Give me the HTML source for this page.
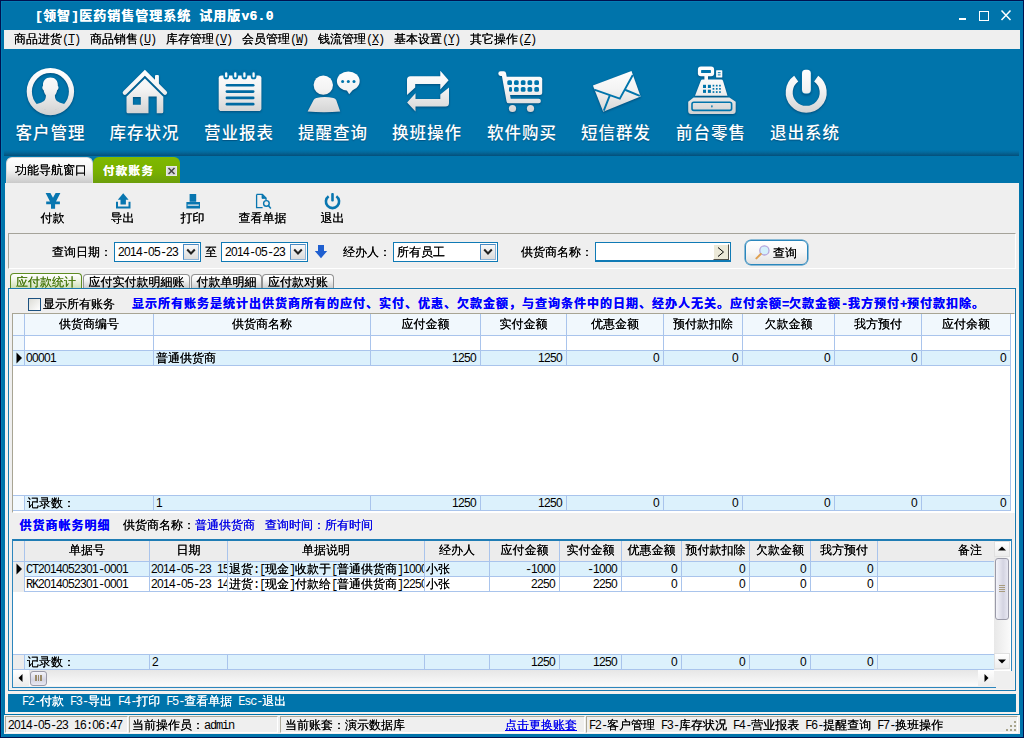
<!DOCTYPE html>
<html lang="zh-CN"><head><meta charset="utf-8"><title>[领智]医药销售管理系统</title>
<style>
*{box-sizing:border-box;margin:0;padding:0}
html,body{width:1024px;height:738px;overflow:hidden}
body{background:#0074ab;position:relative;font-family:"Liberation Sans","WenQuanYi Zen Hei","Noto Sans CJK SC",sans-serif;font-size:12px;line-height:14px;color:#000}
.a{position:absolute}
.t{position:absolute;white-space:nowrap;height:14px;line-height:14px;text-shadow:0 0 0}
.l{font-family:"Liberation Mono",monospace;font-size:12px;letter-spacing:-1.2px;white-space:pre;text-shadow:none}
.d{font-family:"Liberation Sans",sans-serif;font-size:12px;letter-spacing:-0.67px;text-shadow:none}
.lb{font-family:"Liberation Mono",monospace;font-weight:bold;white-space:pre}
.b{font-family:"Liberation Sans","Noto Sans CJK SC",sans-serif;font-weight:bold}
.big{position:absolute;white-space:nowrap;color:#fff;font-family:"Liberation Sans","Noto Sans CJK SC",sans-serif;font-size:16.5px;font-weight:500;letter-spacing:1px;line-height:20px;width:101px;text-align:center;text-shadow:0 1px 1px rgba(0,50,90,.5)}
.c{text-align:center}
.r{text-align:right}
</style></head>
<body>
<div class="a" style="left:0px;top:0px;width:1024px;height:738px;border:1px solid #001250"></div>
<div class="a" style="left:1px;top:1px;width:1022px;height:1px;background:#047eb4"></div>
<div class="a" style="left:1px;top:1px;width:1px;height:736px;background:#047eb4"></div>
<div class="t b" style="left:35px;top:8px;color:#fff;font-size:13px;letter-spacing:1px;height:16px;line-height:16px"><span class="lb" style="font-size:13px;letter-spacing:0.3px">[</span>领智<span class="lb" style="font-size:13px;letter-spacing:0.3px">]</span>医药销售管理系统<span class="lb" style="font-size:13px;letter-spacing:0.3px"> </span>试用版<span class="lb" style="font-size:13px;letter-spacing:0.3px">v6.0</span></div>
<div class="a" style="left:959px;top:18px;width:7px;height:2px;background:#fff"></div>
<div class="a" style="left:979px;top:11px;width:9.5px;height:9.5px;border:1px solid #fff"></div>
<svg class="a" style="left:1000px;top:9px" width="12" height="12" viewBox="0 0 12 12"><path d="M1.5 1.5 L10.5 11 M10.5 1.5 L1.5 11" stroke="#fff" stroke-width="1.5" fill="none"/></svg>
<div class="a" style="left:4px;top:30px;width:1016px;height:19px;background:#efefef"></div>
<div class="t" style="left:14px;top:32px;">商品进货<span class="l">(<u>T</u>)</span></div>
<div class="t" style="left:90px;top:32px;">商品销售<span class="l">(<u>U</u>)</span></div>
<div class="t" style="left:166px;top:32px;">库存管理<span class="l">(<u>V</u>)</span></div>
<div class="t" style="left:242px;top:32px;">会员管理<span class="l">(<u>W</u>)</span></div>
<div class="t" style="left:318px;top:32px;">钱流管理<span class="l">(<u>X</u>)</span></div>
<div class="t" style="left:394px;top:32px;">基本设置<span class="l">(<u>Y</u>)</span></div>
<div class="t" style="left:470px;top:32px;">其它操作<span class="l">(<u>Z</u>)</span></div>
<svg class="a" style="left:0;top:60px;filter:drop-shadow(0 1px 1px rgba(0,45,85,.55))" width="1024" height="62" viewBox="0 60 1024 62">
<defs>
<linearGradient id="g" gradientUnits="userSpaceOnUse" x1="0" y1="68" x2="0" y2="114"><stop offset="0" stop-color="#ffffff"/><stop offset="0.45" stop-color="#f4f4f4"/><stop offset="1" stop-color="#d2d2d2"/></linearGradient>
<clipPath id="cc"><circle cx="50.4" cy="91.6" r="19.2"/></clipPath>
</defs>
<g fill="url(#g)" stroke="none">
<!-- customer -->
<circle cx="50.4" cy="91.6" r="21.1" fill="none" stroke="url(#g)" stroke-width="5.2"/>
<g clip-path="url(#cc)"><path d="M50.4 77.4 C55.6 77.4 58.2 81 57.8 86 C59 86.4 58.6 89.6 57.2 90 C56.6 93 55.6 94.4 54.9 95.2 C54.9 100 57 101.6 61 102.9 C65 104.2 69.5 105 71 108 L71 114 L30 114 L30 108 C31.5 105 36 104.2 40 102.9 C44 101.6 45.9 100 45.9 95.2 C45.2 94.4 44.2 93 43.6 90 C42.2 89.6 41.8 86.4 43 86 C42.6 81 45.2 77.4 50.4 77.4 Z"/></g>
<!-- house -->
<path d="M124.8 92.8 L144.9 72.7 L165 92.8" fill="none" stroke="url(#g)" stroke-width="4.2" stroke-linecap="round" stroke-linejoin="miter"/>
<rect x="155" y="75" width="3.9" height="11" rx="1"/>
<path fill-rule="evenodd" d="M144.9 78.4 L163.3 96.8 V111.7 Q163.3 113.2 161.8 113.2 H128 Q126.5 113.2 126.5 111.7 V96.8 Z M132.9 97 H140.8 V104.7 H132.9 Z M148.5 96.5 H156.7 V113.2 H148.5 Z"/>
<!-- notepad -->
<rect x="218.7" y="75.5" width="42.7" height="35.6" rx="2.8"/>
<g stroke="#0074ab" stroke-width="1.7"><rect x="224.2" y="71.4" width="4" height="7" rx="2"/><rect x="233.3" y="71.4" width="4" height="7" rx="2"/><rect x="242.4" y="71.4" width="4" height="7" rx="2"/><rect x="251.6" y="71.4" width="4" height="7" rx="2"/></g>
<g fill="#006aa2"><rect x="225.6" y="83.9" width="28.9" height="2.7" rx="1.3"/><rect x="225.6" y="90.2" width="28.9" height="2.7" rx="1.3"/><rect x="225.6" y="96.5" width="28.9" height="2.7" rx="1.3"/><rect x="225.6" y="102.8" width="28.9" height="2.7" rx="1.3"/></g>
<!-- reminder -->
<circle cx="323.3" cy="85.1" r="9.7"/>
<path d="M307.6 111.4 L313.6 100 Q314.4 98.4 316.4 98 Q324.6 96.2 333.4 98 Q335.4 98.4 336.2 100 L340.2 111.4 Q324 113 307.6 111.4 Z"/>
<ellipse cx="348.3" cy="81.1" rx="11.4" ry="9.7"/>
<path d="M346 89 L349.2 94.2 L354.5 88 Z"/>
<g fill="#0074ab"><circle cx="342.6" cy="81.5" r="1.5"/><circle cx="348.3" cy="81.5" r="1.5"/><circle cx="354" cy="81.5" r="1.5"/></g>
<!-- swap -->
<path d="M410.5 76.2 H440.3 V70.8 L448.6 80.2 L440.3 89.6 V84 H415.2 V87.4 L407 95 V79.7 Q407 76.2 410.5 76.2 Z"/>
<path d="M445.5 106.6 H415.5 V111.6 L407.1 102.4 L415.5 93.3 V99 H440.3 V94.6 L449 87.6 V103.1 Q449 106.6 445.5 106.6 Z"/>
<!-- cart -->
<path d="M500.6 73.6 H503.8 L508.8 101 H538.6" fill="none" stroke="url(#g)" stroke-width="4.6" stroke-linecap="round" stroke-linejoin="round"/>
<path d="M505.2 76.7 H539.7 Q542.2 76.7 542.2 79.2 V92.4 Q542.2 94.9 539.7 94.9 H509 Z"/>
<g fill="#0074ab"><rect x="507.3" y="80.2" width="4.7" height="4.7" rx="1.5"/><rect x="514.0" y="80.2" width="4.7" height="4.7" rx="1.5"/><rect x="520.8" y="80.2" width="4.7" height="4.7" rx="1.5"/><rect x="527.5" y="80.2" width="4.7" height="4.7" rx="1.5"/><rect x="534.3" y="80.2" width="4.7" height="4.7" rx="1.5"/><rect x="509" y="87.1" width="3" height="4.7" rx="1.3"/><rect x="514.0" y="87.1" width="4.7" height="4.7" rx="1.5"/><rect x="520.8" y="87.1" width="4.7" height="4.7" rx="1.5"/><rect x="527.5" y="87.1" width="4.7" height="4.7" rx="1.5"/><rect x="534.3" y="87.1" width="4.7" height="4.7" rx="1.5"/></g>
<circle cx="512.5" cy="108.5" r="3.6"/><circle cx="530.5" cy="108.5" r="3.6"/>
<!-- envelope -->
<path d="M592.9 85.6 L631.5 71.1 L640.6 96.6 L603.2 111.8 Z"/>
<path d="M594.2 89.6 L619.8 98.6 L632.8 75 M603.8 110.6 L609.8 95.4 M639.8 95.8 L625.6 90" fill="none" stroke="#0074ab" stroke-width="1.9"/>
<!-- register -->
<rect x="697.9" y="66.5" width="16.2" height="9.8" rx="3"/>
<rect x="701.1" y="69.9" width="9.8" height="3.1" rx="0.6" fill="#0074ab"/>
<rect x="704.4" y="75.5" width="3.6" height="5"/>
<rect x="716.1" y="70.2" width="6.2" height="7.4" rx="0.6"/>
<rect x="717.8" y="72.2" width="2.8" height="1" fill="#0074ab"/><rect x="717.8" y="74.4" width="2.8" height="1" fill="#0074ab"/>
<path d="M702.6 79.5 H721.2 Q722.6 79.5 723 80.8 L727.5 95.8 H695 L700.8 80.8 Q701.2 79.5 702.6 79.5 Z"/>
<g fill="#0074ab"><rect x="703.0" y="84.8" width="3" height="3.2"/><rect x="703.0" y="89.7" width="3" height="3.2"/><rect x="707.9" y="84.8" width="3" height="3.2"/><rect x="707.9" y="89.7" width="3" height="3.2"/><rect x="712.6" y="84.8" width="1.7" height="1.7"/><rect x="712.6" y="88.0" width="1.7" height="1.7"/><rect x="712.6" y="91.2" width="1.7" height="1.7"/><rect x="715.9" y="84.8" width="1.7" height="1.7"/><rect x="715.9" y="88.0" width="1.7" height="1.7"/><rect x="715.9" y="91.2" width="1.7" height="1.7"/><rect x="719.1" y="84.8" width="1.7" height="1.7"/><rect x="719.1" y="88.0" width="1.7" height="1.7"/><rect x="719.1" y="91.2" width="1.7" height="1.7"/></g>
<path d="M693.6 97.4 H729.4 L735.7 101.8 V111 Q735.7 114 732.7 114 H691.2 Q688.2 114 688.2 111 V101.8 Z"/>
<rect x="692" y="102.2" width="39.6" height="8.2" rx="1.8" fill="none" stroke="#0074ab" stroke-width="1.6"/>
<rect x="711.2" y="105.2" width="1.4" height="2.2" rx="0.6" fill="#0074ab"/>
<!-- power -->
<path d="M796.2 78.6 A17 17 0 1 0 816.2 78.6" fill="none" stroke="url(#g)" stroke-width="7" stroke-linecap="butt"/>
<rect x="802" y="69.8" width="8.8" height="23.6" rx="3.6" stroke="#0074ab" stroke-width="1.6" paint-order="stroke"/>
</g>
</svg>

<div class="big" style="left:0px;top:123px;">客户管理</div>
<div class="big" style="left:94px;top:123px;">库存状况</div>
<div class="big" style="left:188.5px;top:123px;">营业报表</div>
<div class="big" style="left:282.5px;top:123px;">提醒查询</div>
<div class="big" style="left:376.5px;top:123px;">换班操作</div>
<div class="big" style="left:471.5px;top:123px;">软件购买</div>
<div class="big" style="left:565.5px;top:123px;">短信群发</div>
<div class="big" style="left:660.5px;top:123px;">前台零售</div>
<div class="big" style="left:754.5px;top:123px;">退出系统</div>
<div class="a" style="left:4px;top:150px;width:1015px;height:6px;background:linear-gradient(to bottom,#0074ab 0%,#036a9e 35%,#045c8a 70%,#044f7a 100%)"></div>
<div class="a" style="left:6px;top:157px;width:87px;height:27px;background:linear-gradient(to bottom,#ffffff 0%,#f4f4f4 45%,#c6c6c6 100%);border-radius:6px 6px 0 0;border:1px solid #d8d8d8;border-bottom:none"></div>
<div class="t" style="left:15px;top:163px;">功能导航窗口</div>
<div class="a" style="left:93px;top:157px;width:87px;height:27px;background:linear-gradient(to bottom,#7fb900 0%,#78b000 55%,#6a9c0c 100%);border-radius:6px 6px 0 0"></div>
<div class="t b" style="left:103px;top:163.5px;color:#fff;font-size:11.5px;letter-spacing:1.3px">付款账务</div>
<div class="a" style="left:166px;top:166px;width:11px;height:10px;background:#d9d9d9;border:1px solid #e8e8e8"></div>
<svg class="a" style="left:166px;top:166px" width="11" height="10" viewBox="0 0 11 10"><path d="M2.5 2 L8.5 8 M8.5 2 L2.5 8" stroke="#444" stroke-width="1.5" fill="none"/></svg>
<div class="a" style="left:5px;top:183px;width:1014px;height:531px;background:#efefef"></div>
<div class="a" style="left:5px;top:287px;width:1014px;height:427px;background:#f5f1ef"></div>
<div class="t c" style="left:12.5px;top:211px;width:80px;">付款</div>
<div class="t c" style="left:82.5px;top:211px;width:80px;">导出</div>
<div class="t c" style="left:152.5px;top:211px;width:80px;">打印</div>
<div class="t c" style="left:222.5px;top:211px;width:80px;">查看单据</div>
<div class="t c" style="left:292.5px;top:211px;width:80px;">退出</div>
<svg class="a" style="left:0;top:190px" width="400" height="22" viewBox="0 190 400 22">
<g fill="#0876b0" stroke="none">
<!-- yen -->
<path d="M45.6 193 H50.4 L53 197.8 L55.6 193 H60.4 L56 201.4 H59.9 V204.2 H55.1 V208.8 H51 V204.2 H46.2 V201.4 H50 Z"/>
<!-- export -->
<path d="M123.2 193.2 L128.6 199.8 H125.9 V204.6 H120.5 V199.8 H117.8 Z"/>
<path d="M116 201.8 H118 V206.6 H128.5 V201.8 H130.5 V208.6 H116 Z"/>
<!-- print -->
<rect x="189.6" y="194" width="6.6" height="7.8"/>
<path d="M186.4 202 H200 V208.6 H186.4 Z M187.6 204.6 V205.8 H198.8 V204.6 Z" fill-rule="evenodd"/>
<!-- view doc -->
<path d="M256.6 194.4 H262.4 L266 198 V200 M256.6 194.4 V207.6 H262.6" fill="none" stroke="#0876b0" stroke-width="1.3"/>
<path d="M262 194.4 V198.4 H266 Z" fill="#0876b0" stroke="#0876b0" stroke-width="0.8"/>
<circle cx="266.4" cy="203.4" r="2.8" fill="none" stroke="#0876b0" stroke-width="1.4"/>
<path d="M268.4 205.6 L270.8 208.4" stroke="#0876b0" stroke-width="1.5" fill="none"/>
<!-- power -->
<path d="M328.6 196.2 A6.6 6.6 0 1 0 336.4 196.2" fill="none" stroke="#0876b0" stroke-width="2.6"/>
<rect x="331.2" y="193" width="2.6" height="8.4" rx="1"/>
</g>
</svg>

<div class="a" style="left:8px;top:233px;width:1008px;height:36px;border:1px solid #a5a39a;border-right-color:#fff;border-bottom-color:#fff"></div>
<div class="t" style="left:52px;top:245px;">查询日期：</div>
<div class="a" style="left:114px;top:242px;width:87px;height:20px;background:#fff;border:1px solid #107ab5"></div>
<div class="a" style="left:183px;top:244px;width:16px;height:16px;background:linear-gradient(#f8f8f8,#dcdcdc);border:1px solid #4a8ac4;border-right-color:#8fb4d8;border-bottom-color:#8fb4d8"></div>
<svg class="a" style="left:186px;top:248px" width="10" height="8" viewBox="0 0 10 8"><path d="M1.2 1.5 L5 5.5 L8.8 1.5" stroke="#222" stroke-width="2" fill="none"/></svg>
<div class="t" style="left:118px;top:245px;"><span class="d">2014</span><span class="l">-</span><span class="d">05</span><span class="l">-</span><span class="d">23</span></div>
<div class="t" style="left:205px;top:245px;">至</div>
<div class="a" style="left:221px;top:242px;width:87px;height:20px;background:#fff;border:1px solid #107ab5"></div>
<div class="a" style="left:290px;top:244px;width:16px;height:16px;background:linear-gradient(#f8f8f8,#dcdcdc);border:1px solid #4a8ac4;border-right-color:#8fb4d8;border-bottom-color:#8fb4d8"></div>
<svg class="a" style="left:293px;top:248px" width="10" height="8" viewBox="0 0 10 8"><path d="M1.2 1.5 L5 5.5 L8.8 1.5" stroke="#222" stroke-width="2" fill="none"/></svg>
<div class="t" style="left:225px;top:245px;"><span class="d">2014</span><span class="l">-</span><span class="d">05</span><span class="l">-</span><span class="d">23</span></div>
<svg class="a" style="left:314px;top:244px" width="14" height="15" viewBox="0 0 14 15"><path d="M4 1 H10 V7 H13.2 L7 14.2 L0.8 7 H4 Z" fill="#1f5fd0"/></svg>
<div class="t" style="left:343px;top:245px;">经办人：</div>
<div class="a" style="left:393px;top:242px;width:105px;height:20px;background:#fff;border:1px solid #107ab5"></div>
<div class="a" style="left:480px;top:244px;width:16px;height:16px;background:linear-gradient(#f8f8f8,#dcdcdc);border:1px solid #4a8ac4;border-right-color:#8fb4d8;border-bottom-color:#8fb4d8"></div>
<svg class="a" style="left:483px;top:248px" width="10" height="8" viewBox="0 0 10 8"><path d="M1.2 1.5 L5 5.5 L8.8 1.5" stroke="#222" stroke-width="2" fill="none"/></svg>
<div class="t" style="left:397px;top:245px;">所有员工</div>
<div class="t" style="left:521px;top:245px;">供货商名称：</div>
<div class="a" style="left:595px;top:242px;width:136px;height:20px;background:#fff;border:1px solid #107ab5;border-bottom-width:2px"></div>
<div class="a" style="left:713px;top:244px;width:16px;height:16px;background:#ece9d8;border:1px solid #fff;border-right-color:#55524a;border-bottom-color:#55524a"></div>
<svg class="a" style="left:717px;top:247px" width="8" height="10" viewBox="0 0 8 10"><path d="M1 0.5 L6.5 5 L1 9.5" stroke="#000" stroke-width="1" fill="none"/></svg>
<div class="a" style="left:745px;top:240px;width:63px;height:25px;border:1px solid #2a87bd;border-radius:6px;background:linear-gradient(#ffffff,#f6f6f6 50%,#e2e2e2);box-shadow:0 0 0 0.5px #2a87bd"></div>
<svg class="a" style="left:753px;top:243px" width="20" height="20" viewBox="0 0 20 20"><circle cx="11.4" cy="7.4" r="4.6" fill="#d4f0fb" stroke="#b4a4dc" stroke-width="1.3"/><path d="M7.8 11 L3.4 15.4" stroke="#e0a050" stroke-width="2" stroke-linecap="round"/></svg>
<div class="t" style="left:773px;top:246px;">查询</div>
<div class="a" style="left:83px;top:274px;width:107px;height:14px;border:1px solid #919191;border-bottom:none;border-radius:4px 4px 0 0;background:linear-gradient(#ffffff,#f4f4f4 40%,#cdcdcd)"></div>
<div class="t c" style="left:83px;top:275px;width:107px;">应付实付款明細账</div>
<div class="a" style="left:191px;top:274px;width:71px;height:14px;border:1px solid #919191;border-bottom:none;border-radius:4px 4px 0 0;background:linear-gradient(#ffffff,#f4f4f4 40%,#cdcdcd)"></div>
<div class="t c" style="left:191px;top:275px;width:71px;">付款单明細</div>
<div class="a" style="left:262px;top:274px;width:72px;height:14px;border:1px solid #919191;border-bottom:none;border-radius:4px 4px 0 0;background:linear-gradient(#ffffff,#f4f4f4 40%,#cdcdcd)"></div>
<div class="t c" style="left:262px;top:275px;width:72px;">应付款对账</div>
<div class="a" style="left:8px;top:288px;width:1008px;height:403px;background:#efefef;border:1px solid #1a7ab0;box-shadow:inset 0 0 0 1px #f7f3f1"></div>
<div class="a" style="left:10px;top:273px;width:72px;height:15px;border:1px solid #5f8c22;border-bottom:none;border-radius:4px 4px 0 0;background:linear-gradient(#ffffff,#f2f6ea 40%,#cfe0b6)"></div>
<div class="t c" style="left:10px;top:275px;width:72px;color:#4b7a12">应付款统计</div>
<div class="a" style="left:28px;top:298px;width:13px;height:13px;border:1px solid #1c5180;background:linear-gradient(135deg,#dcdcd6,#ffffff)"></div>
<div class="t" style="left:43px;top:297px;">显示所有账务</div>
<div class="t b" style="left:132px;top:297px;color:#0000ff;font-size:12px;letter-spacing:1px">显示所有账务是统计出供货商所有的应付、实付、优惠、欠款金额，与查询条件中的日期、经办人无关。应付余额<span class="lb" style="letter-spacing:-0.2px">=</span>欠款金额<span class="lb" style="letter-spacing:-0.2px">-</span>我方预付<span class="lb" style="letter-spacing:-0.2px">+</span>预付款扣除。</div>
<div class="a" style="left:12px;top:313px;width:1003px;height:200px;background:#fff;border:1px solid #a8a594;border-right-color:#fff;border-bottom-color:#fff"></div>
<div class="a" style="left:1010px;top:314px;width:1px;height:197px;background:#a9c4ec"></div>
<div class="a" style="left:13px;top:314px;width:997px;height:21px;background:#f1f8fd"></div>
<div class="a" style="left:13px;top:335px;width:997px;height:1px;background:#a9c4ec"></div>
<div class="a" style="left:13px;top:336px;width:11px;height:14px;background:#f1f8fd"></div>
<div class="a" style="left:13px;top:350px;width:997px;height:1px;background:#a9c4ec"></div>
<div class="a" style="left:13px;top:351px;width:997px;height:14px;background:#dcf1fc"></div>
<div class="a" style="left:13px;top:365px;width:997px;height:1px;background:#a9c4ec"></div>
<div class="a" style="left:13px;top:495px;width:997px;height:1px;background:#a9c4ec"></div>
<div class="a" style="left:13px;top:496px;width:997px;height:14px;background:#dcf1fc"></div>
<div class="a" style="left:13px;top:496px;width:11px;height:14px;background:#f2f9fe"></div>
<div class="a" style="left:13px;top:510px;width:997px;height:1px;background:#a9c4ec"></div>
<div class="a" style="left:24px;top:314px;width:1px;height:52px;background:#a9c4ec"></div>
<div class="a" style="left:24px;top:495px;width:1px;height:16px;background:#a9c4ec"></div>
<div class="a" style="left:153px;top:314px;width:1px;height:52px;background:#a9c4ec"></div>
<div class="a" style="left:153px;top:495px;width:1px;height:16px;background:#a9c4ec"></div>
<div class="a" style="left:370px;top:314px;width:1px;height:52px;background:#a9c4ec"></div>
<div class="a" style="left:370px;top:495px;width:1px;height:16px;background:#a9c4ec"></div>
<div class="a" style="left:480px;top:314px;width:1px;height:52px;background:#a9c4ec"></div>
<div class="a" style="left:480px;top:495px;width:1px;height:16px;background:#a9c4ec"></div>
<div class="a" style="left:566px;top:314px;width:1px;height:52px;background:#a9c4ec"></div>
<div class="a" style="left:566px;top:495px;width:1px;height:16px;background:#a9c4ec"></div>
<div class="a" style="left:663px;top:314px;width:1px;height:52px;background:#a9c4ec"></div>
<div class="a" style="left:663px;top:495px;width:1px;height:16px;background:#a9c4ec"></div>
<div class="a" style="left:742px;top:314px;width:1px;height:52px;background:#a9c4ec"></div>
<div class="a" style="left:742px;top:495px;width:1px;height:16px;background:#a9c4ec"></div>
<div class="a" style="left:834px;top:314px;width:1px;height:52px;background:#a9c4ec"></div>
<div class="a" style="left:834px;top:495px;width:1px;height:16px;background:#a9c4ec"></div>
<div class="a" style="left:921px;top:314px;width:1px;height:52px;background:#a9c4ec"></div>
<div class="a" style="left:921px;top:495px;width:1px;height:16px;background:#a9c4ec"></div>
<div class="t c" style="left:25px;top:317px;width:128px;">供货商编号</div>
<div class="t c" style="left:154px;top:317px;width:216px;">供货商名称</div>
<div class="t c" style="left:371px;top:317px;width:109px;">应付金额</div>
<div class="t c" style="left:481px;top:317px;width:85px;">实付金额</div>
<div class="t c" style="left:567px;top:317px;width:96px;">优惠金额</div>
<div class="t c" style="left:664px;top:317px;width:78px;">预付款扣除</div>
<div class="t c" style="left:743px;top:317px;width:91px;">欠款金额</div>
<div class="t c" style="left:835px;top:317px;width:86px;">我方预付</div>
<div class="t c" style="left:922px;top:317px;width:88px;">应付余额</div>
<div class="t" style="left:26px;top:351px;"><span class="d">00001</span></div>
<div class="t" style="left:27px;top:496px;">记录数：</div>
<div class="t" style="left:156px;top:351px;">普通供货商</div>
<div class="t" style="left:156px;top:496px;"><span class="d">1</span></div>
<div class="t r" style="left:371px;top:351px;width:105px;"><span class="d">1250</span></div>
<div class="t r" style="left:371px;top:496px;width:105px;"><span class="d">1250</span></div>
<div class="t r" style="left:481px;top:351px;width:81px;"><span class="d">1250</span></div>
<div class="t r" style="left:481px;top:496px;width:81px;"><span class="d">1250</span></div>
<div class="t r" style="left:567px;top:351px;width:92px;"><span class="d">0</span></div>
<div class="t r" style="left:567px;top:496px;width:92px;"><span class="d">0</span></div>
<div class="t r" style="left:664px;top:351px;width:74px;"><span class="d">0</span></div>
<div class="t r" style="left:664px;top:496px;width:74px;"><span class="d">0</span></div>
<div class="t r" style="left:743px;top:351px;width:87px;"><span class="d">0</span></div>
<div class="t r" style="left:743px;top:496px;width:87px;"><span class="d">0</span></div>
<div class="t r" style="left:835px;top:351px;width:82px;"><span class="d">0</span></div>
<div class="t r" style="left:835px;top:496px;width:82px;"><span class="d">0</span></div>
<div class="t r" style="left:922px;top:351px;width:84px;"><span class="d">0</span></div>
<div class="t r" style="left:922px;top:496px;width:84px;"><span class="d">0</span></div>
<svg class="a" style="left:16px;top:352px" width="7" height="12" viewBox="0 0 7 12"><path d="M0.5 0.5 L6 6 L0.5 11.5 Z" fill="#000"/></svg>
<div class="t b" style="left:19.5px;top:519px;color:#0000ff;font-size:12px;letter-spacing:1px">供货商帐务明细</div>
<div class="t" style="left:123px;top:518px;">供货商名称：<span style="color:#0000e6">普通供货商</span></div>
<div class="t" style="left:265px;top:518px;color:#0000e6">查询时间：所有时间</div>
<div class="a" style="left:12px;top:539px;width:1000px;height:132px;background:#fff;border:1px solid #2d86bd;border-top:2px solid #1f7cb4;border-bottom:none"></div>
<div class="a" style="left:12px;top:670px;width:984px;height:18px;border:1px solid #2d86bd;border-top:none;border-right:none"></div>
<div class="a" style="left:13px;top:541px;width:981px;height:20px;background:#ececec"></div>
<div class="a" style="left:13px;top:561px;width:981px;height:1px;background:#a9c4ec"></div>
<div class="a" style="left:13px;top:562px;width:981px;height:14px;background:#dcf1fc"></div>
<div class="a" style="left:13px;top:576px;width:981px;height:1px;background:#a9c4ec"></div>
<div class="a" style="left:13px;top:591px;width:981px;height:1px;background:#a9c4ec"></div>
<div class="a" style="left:13px;top:562px;width:11px;height:30px;background:#ececec"></div>
<div class="a" style="left:13px;top:654px;width:981px;height:1px;background:#a9c4ec"></div>
<div class="a" style="left:13px;top:655px;width:981px;height:14px;background:#dcf1fc"></div>
<div class="a" style="left:13px;top:655px;width:11px;height:14px;background:#ececec"></div>
<div class="a" style="left:13px;top:669px;width:981px;height:1px;background:#a9c4ec"></div>
<div class="a" style="left:24px;top:541px;width:1px;height:51px;background:#a9c4ec"></div>
<div class="a" style="left:24px;top:654px;width:1px;height:16px;background:#a9c4ec"></div>
<div class="a" style="left:149px;top:541px;width:1px;height:51px;background:#a9c4ec"></div>
<div class="a" style="left:149px;top:654px;width:1px;height:16px;background:#a9c4ec"></div>
<div class="a" style="left:227px;top:541px;width:1px;height:51px;background:#a9c4ec"></div>
<div class="a" style="left:227px;top:654px;width:1px;height:16px;background:#a9c4ec"></div>
<div class="a" style="left:424px;top:541px;width:1px;height:51px;background:#a9c4ec"></div>
<div class="a" style="left:424px;top:654px;width:1px;height:16px;background:#a9c4ec"></div>
<div class="a" style="left:489px;top:541px;width:1px;height:51px;background:#a9c4ec"></div>
<div class="a" style="left:489px;top:654px;width:1px;height:16px;background:#a9c4ec"></div>
<div class="a" style="left:559px;top:541px;width:1px;height:51px;background:#a9c4ec"></div>
<div class="a" style="left:559px;top:654px;width:1px;height:16px;background:#a9c4ec"></div>
<div class="a" style="left:621px;top:541px;width:1px;height:51px;background:#a9c4ec"></div>
<div class="a" style="left:621px;top:654px;width:1px;height:16px;background:#a9c4ec"></div>
<div class="a" style="left:681px;top:541px;width:1px;height:51px;background:#a9c4ec"></div>
<div class="a" style="left:681px;top:654px;width:1px;height:16px;background:#a9c4ec"></div>
<div class="a" style="left:749px;top:541px;width:1px;height:51px;background:#a9c4ec"></div>
<div class="a" style="left:749px;top:654px;width:1px;height:16px;background:#a9c4ec"></div>
<div class="a" style="left:810px;top:541px;width:1px;height:51px;background:#a9c4ec"></div>
<div class="a" style="left:810px;top:654px;width:1px;height:16px;background:#a9c4ec"></div>
<div class="a" style="left:877px;top:541px;width:1px;height:51px;background:#a9c4ec"></div>
<div class="a" style="left:877px;top:654px;width:1px;height:16px;background:#a9c4ec"></div>
<div class="t c" style="left:25px;top:543px;width:124px;">单据号</div>
<div class="t c" style="left:150px;top:543px;width:77px;">日期</div>
<div class="t c" style="left:228px;top:543px;width:196px;">单据说明</div>
<div class="t c" style="left:425px;top:543px;width:64px;">经办人</div>
<div class="t c" style="left:490px;top:543px;width:69px;">应付金额</div>
<div class="t c" style="left:560px;top:543px;width:61px;">实付金额</div>
<div class="t c" style="left:622px;top:543px;width:59px;">优惠金额</div>
<div class="t c" style="left:682px;top:543px;width:67px;">预付款扣除</div>
<div class="t c" style="left:750px;top:543px;width:60px;">欠款金额</div>
<div class="t c" style="left:811px;top:543px;width:66px;">我方预付</div>
<div class="t r" style="left:877px;top:543px;width:105px;">备注</div>
<div class="t" style="left:26px;top:562px;width:123px;overflow:hidden"><span class="l">CT</span><span class="d">2014052301</span><span class="l">-</span><span class="d">0001</span></div>
<div class="t" style="left:151px;top:562px;width:76px;overflow:hidden"><span class="d">2014</span><span class="l">-</span><span class="d">05</span><span class="l">-</span><span class="d">23</span><span class="l"> </span><span class="d">15</span></div>
<div class="t" style="left:229px;top:562px;width:195px;overflow:hidden">退货<span class="l">:[</span>现金<span class="l">]</span>收款于<span class="l">[</span>普通供货商<span class="l">]</span><span class="d">1000</span></div>
<div class="t" style="left:426px;top:562px;width:63px;overflow:hidden">小张</div>
<div class="t r" style="left:490px;top:562px;width:65px;"><span class="l">-</span><span class="d">1000</span></div>
<div class="t r" style="left:560px;top:562px;width:57px;"><span class="l">-</span><span class="d">1000</span></div>
<div class="t r" style="left:622px;top:562px;width:55px;"><span class="d">0</span></div>
<div class="t r" style="left:682px;top:562px;width:63px;"><span class="d">0</span></div>
<div class="t r" style="left:750px;top:562px;width:56px;"><span class="d">0</span></div>
<div class="t r" style="left:811px;top:562px;width:62px;"><span class="d">0</span></div>
<div class="t" style="left:26px;top:577px;width:123px;overflow:hidden"><span class="l">RK</span><span class="d">2014052301</span><span class="l">-</span><span class="d">0001</span></div>
<div class="t" style="left:151px;top:577px;width:76px;overflow:hidden"><span class="d">2014</span><span class="l">-</span><span class="d">05</span><span class="l">-</span><span class="d">23</span><span class="l"> </span><span class="d">14</span></div>
<div class="t" style="left:229px;top:577px;width:195px;overflow:hidden">进货<span class="l">:[</span>现金<span class="l">]</span>付款给<span class="l">[</span>普通供货商<span class="l">]</span><span class="d">2250</span></div>
<div class="t" style="left:426px;top:577px;width:63px;overflow:hidden">小张</div>
<div class="t r" style="left:490px;top:577px;width:65px;"><span class="d">2250</span></div>
<div class="t r" style="left:560px;top:577px;width:57px;"><span class="d">2250</span></div>
<div class="t r" style="left:622px;top:577px;width:55px;"><span class="d">0</span></div>
<div class="t r" style="left:682px;top:577px;width:63px;"><span class="d">0</span></div>
<div class="t r" style="left:750px;top:577px;width:56px;"><span class="d">0</span></div>
<div class="t r" style="left:811px;top:577px;width:62px;"><span class="d">0</span></div>
<div class="t" style="left:27px;top:655px;">记录数：</div>
<div class="t" style="left:152px;top:655px;"><span class="d">2</span></div>
<div class="t r" style="left:490px;top:655px;width:65px;"><span class="d">1250</span></div>
<div class="t r" style="left:560px;top:655px;width:57px;"><span class="d">1250</span></div>
<div class="t r" style="left:622px;top:655px;width:55px;"><span class="d">0</span></div>
<div class="t r" style="left:682px;top:655px;width:63px;"><span class="d">0</span></div>
<div class="t r" style="left:750px;top:655px;width:56px;"><span class="d">0</span></div>
<div class="t r" style="left:811px;top:655px;width:62px;"><span class="d">0</span></div>
<svg class="a" style="left:16px;top:563px" width="7" height="12" viewBox="0 0 7 12"><path d="M0.5 0.5 L6 6 L0.5 11.5 Z" fill="#000"/></svg>
<div class="a" style="left:994px;top:541px;width:16px;height:129px;background:linear-gradient(to right,#e8e8e8,#fafafa)"></div>
<div class="a" style="left:994px;top:541px;width:16px;height:16px;background:linear-gradient(#ffffff,#ececec);border:1px solid #e0e0e0"></div>
<svg class="a" style="left:998px;top:546px" width="8" height="5" viewBox="0 0 8 5"><path d="M0 4.5 L4 0.5 L8 4.5 Z" fill="#000"/></svg>
<div class="a" style="left:995px;top:558px;width:14px;height:62px;border:1px solid #9a9aa8;border-radius:3px;background:linear-gradient(to right,#f4f4fa,#d4d4e2 60%,#e8e8f2)"></div>
<div class="a" style="left:999px;top:585px;width:6px;height:1px;background:#a89c80"></div>
<div class="a" style="left:999px;top:587px;width:6px;height:1px;background:#a89c80"></div>
<div class="a" style="left:999px;top:589px;width:6px;height:1px;background:#a89c80"></div>
<div class="a" style="left:999px;top:591px;width:6px;height:1px;background:#a89c80"></div>
<div class="a" style="left:994px;top:653px;width:16px;height:16px;background:linear-gradient(#ffffff,#ececec);border:1px solid #e0e0e0"></div>
<svg class="a" style="left:998px;top:659px" width="8" height="5" viewBox="0 0 8 5"><path d="M0 0.5 L4 4.5 L8 0.5 Z" fill="#000"/></svg>
<div class="a" style="left:13px;top:670px;width:981px;height:16px;background:linear-gradient(#e6e6e6,#fbfbfb)"></div>
<div class="a" style="left:13px;top:670px;width:16px;height:16px;background:linear-gradient(#ffffff,#ececec)"></div>
<svg class="a" style="left:18px;top:674px" width="5" height="8" viewBox="0 0 5 8"><path d="M4.5 0 L0.5 4 L4.5 8 Z" fill="#000"/></svg>
<div class="a" style="left:978px;top:670px;width:16px;height:16px;background:linear-gradient(#ffffff,#ececec)"></div>
<svg class="a" style="left:984px;top:674px" width="5" height="8" viewBox="0 0 5 8"><path d="M0.5 0 L4.5 4 L0.5 8 Z" fill="#000"/></svg>
<div class="a" style="left:30px;top:671px;width:17px;height:15px;border:1px solid #9a9aa8;border-radius:3px;background:linear-gradient(#f4f4fa,#d4d4e2 60%,#e8e8f2)"></div>
<div class="a" style="left:35px;top:675px;width:1.5px;height:6px;background:#9a8a68"></div>
<div class="a" style="left:37.5px;top:675px;width:1.5px;height:6px;background:#9a8a68"></div>
<div class="a" style="left:40px;top:675px;width:1.5px;height:6px;background:#9a8a68"></div>
<div class="a" style="left:8px;top:694px;width:1008px;height:18px;background:#0074ab"></div>
<div class="t" style="left:22px;top:694px;color:#fff"><span class="l">F</span><span class="d">2</span><span class="l">-</span>付款<span class="l"> F</span><span class="d">3</span><span class="l">-</span>导出<span class="l"> F</span><span class="d">4</span><span class="l">-</span>打印<span class="l"> F</span><span class="d">5</span><span class="l">-</span>查看单据<span class="l"> Esc-</span>退出</div>
<div class="a" style="left:4px;top:715px;width:1016px;height:19px;background:#efefef;border-top:1px solid #f7f3f1"></div>
<div class="a" style="left:5px;top:716px;width:123px;height:17px;border:1px solid #aca899;border-right-color:#fff;border-bottom-color:#fff"></div>
<div class="t" style="left:8px;top:718px;"><span class="d">2014</span><span class="l">-</span><span class="d">05</span><span class="l">-</span><span class="d">23</span><span class="l"> </span><span class="d">16</span><span class="l">:</span><span class="d">06</span><span class="l">:</span><span class="d">47</span></div>
<div class="a" style="left:129px;top:716px;width:149px;height:17px;border:1px solid #aca899;border-right-color:#fff;border-bottom-color:#fff"></div>
<div class="t" style="left:132px;top:718px;">当前操作员：<span class="l">admin</span></div>
<div class="a" style="left:280px;top:716px;width:305px;height:17px;border:1px solid #aca899;border-right-color:#fff;border-bottom-color:#fff"></div>
<div class="t" style="left:285px;top:718px;">当前账套：演示数据库</div>
<div class="t" style="left:505px;top:718px;color:#0000ee;text-decoration:underline">点击更换账套</div>
<div class="a" style="left:586px;top:716px;width:432px;height:17px;border:1px solid #aca899;border-right-color:#fff;border-bottom-color:#fff"></div>
<div class="t" style="left:589px;top:718px;"><span class="l">F</span><span class="d">2</span><span class="l">-</span>客户管理<span class="l"> F</span><span class="d">3</span><span class="l">-</span>库存状况<span class="l"> F</span><span class="d">4</span><span class="l">-</span>营业报表<span class="l"> F</span><span class="d">6</span><span class="l">-</span>提醒查询<span class="l"> F</span><span class="d">7</span><span class="l">-</span>换班操作</div>
<svg class="a" style="left:1005px;top:719.5px" width="12" height="12" viewBox="0 0 12 12"><g fill="#a8a48c"><rect x="9" y="9" width="2" height="2"/><rect x="5" y="9" width="2" height="2"/><rect x="9" y="5" width="2" height="2"/><rect x="1" y="9" width="2" height="2"/><rect x="5" y="5" width="2" height="2"/><rect x="9" y="1" width="2" height="2"/></g></svg>
</body></html>
